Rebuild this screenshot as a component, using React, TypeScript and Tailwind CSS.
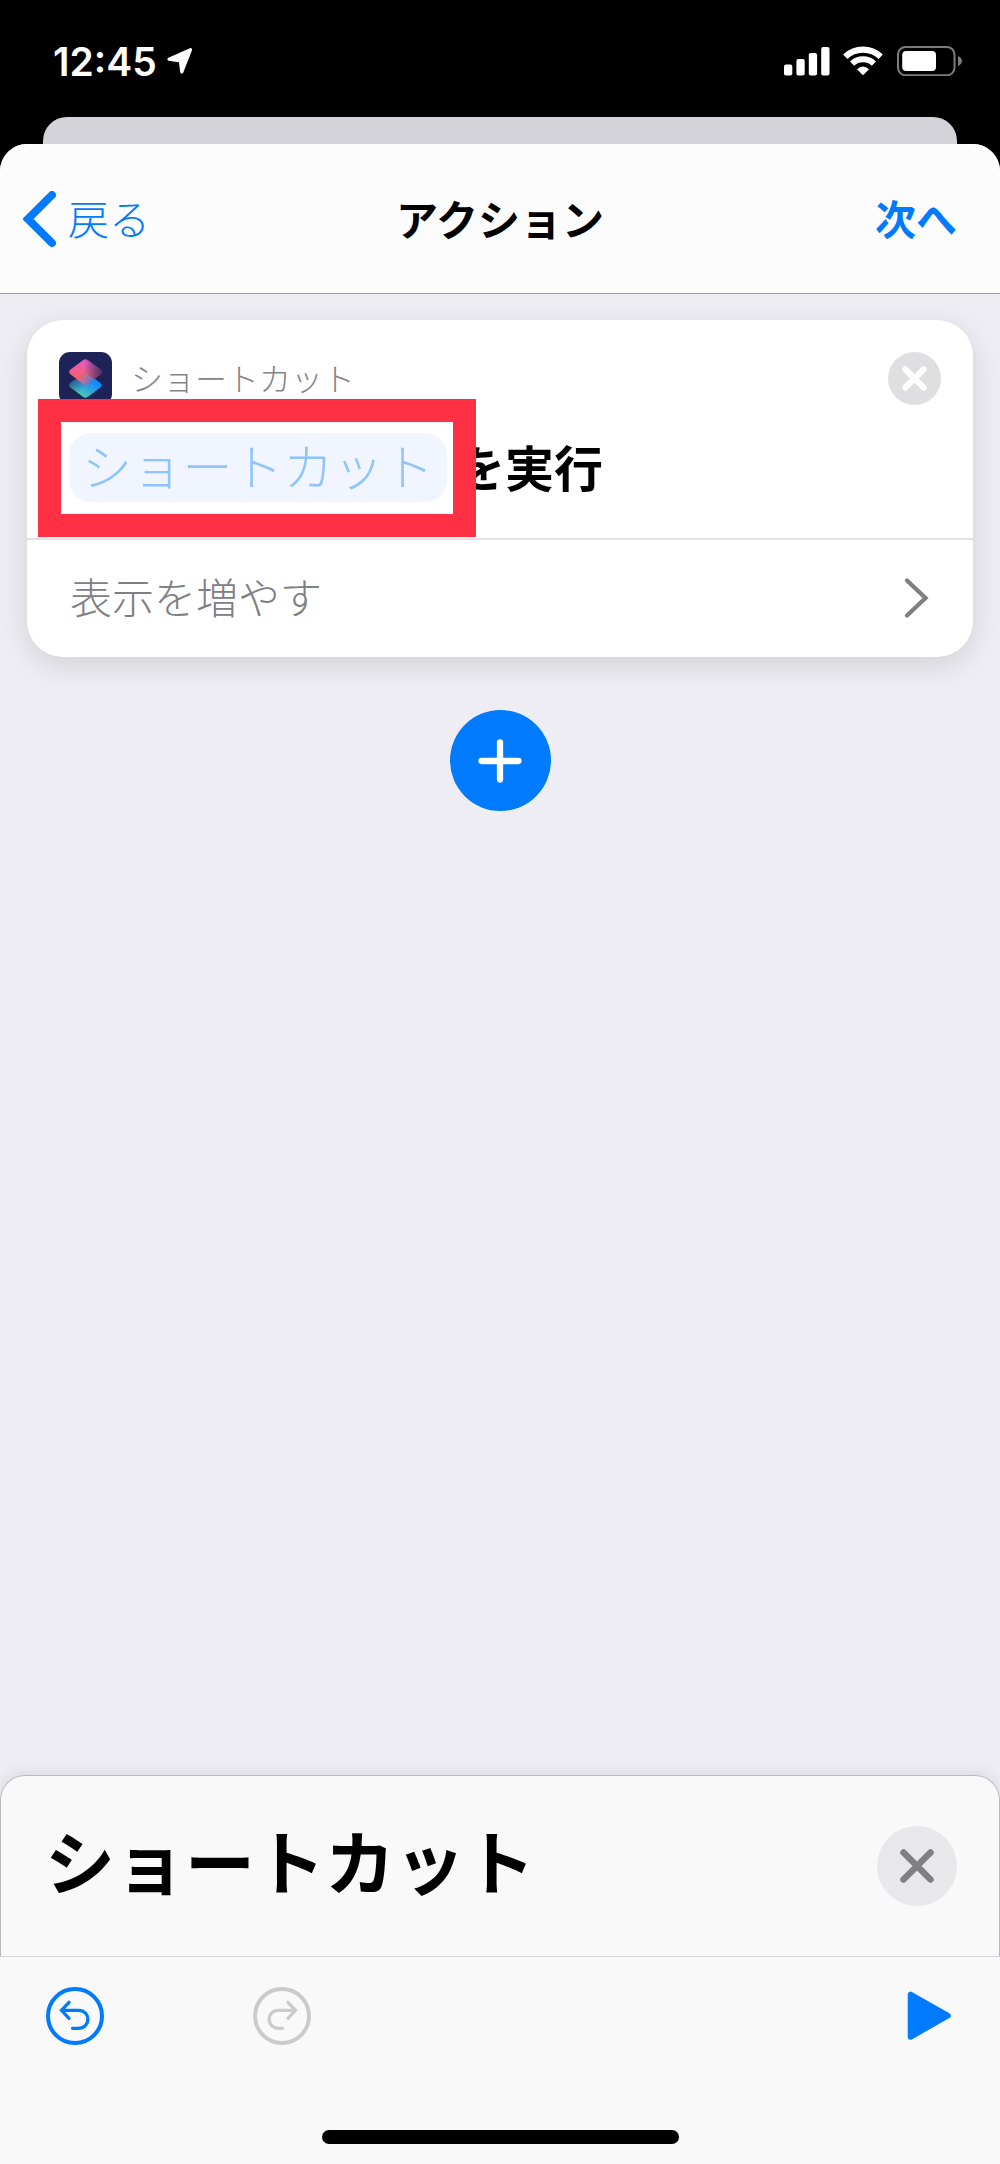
import React from "react";

const jp = "font-['Noto_Sans_CJK_JP',sans-serif]";

function StatusBar() {
  return (
    <div className="flex h-[117px] items-start justify-between pl-[53px] pr-[37px]">
      <div className="flex items-start">
        <span className="mt-[42px] font-['Inter',sans-serif] text-[39px] font-semibold leading-[39px] text-white">
          12:45
        </span>
        <svg className="ml-[9px] mt-[46px]" width="30" height="30" viewBox="0 0 30 30">
          <path
            d="M3 13.2 L24.5 3.6 L15.8 26 L14.4 14.8 Z"
            fill="white"
            stroke="white"
            strokeWidth="3.2"
            strokeLinejoin="round"
          />
        </svg>
      </div>
      <div className="flex items-start pt-[46px]">
        <svg width="46" height="30" viewBox="0 0 46 30" fill="white">
          <rect x="0" y="18.5" width="8.3" height="11" rx="2" />
          <rect x="12.4" y="13" width="8.3" height="16.5" rx="2" />
          <rect x="24.8" y="7" width="8.3" height="22.5" rx="2" />
          <rect x="37.2" y="1" width="8.3" height="28.5" rx="2" />
        </svg>
        <svg className="ml-[13px]" width="40" height="30" viewBox="0 0 40 30" fill="none" stroke="white">
          <path d="M2.3 10.7 A25.8 25.8 0 0 1 37.7 10.7" strokeWidth="6.2" />
          <path d="M9.1 17.6 A16 16 0 0 1 30.9 17.6" strokeWidth="6" />
          <path d="M14 23.2 Q20 17.6 26 23.2 L20.9 28.5 Q20 29.3 19.1 28.5 Z" fill="white" stroke="none" />
        </svg>
        <svg className="ml-[14px]" width="66" height="30" viewBox="0 0 66 30">
          <rect x="1" y="1" width="56.5" height="28.3" rx="7.5" fill="none" stroke="#7c7c7c" strokeWidth="2" />
          <rect x="5.2" y="5" width="33.8" height="20" rx="4" fill="white" />
          <path d="M61 10 Q65 12 65 15 Q65 18 61 20 Z" fill="#7c7c7c" />
        </svg>
      </div>
    </div>
  );
}

function NavBar() {
  return (
    <header className="grid h-[150px] grid-cols-3 items-start rounded-t-[27px] border-b border-[#9b9b9f] bg-[#fcfcfd] pt-[46px]">
      <div className="flex items-start pl-[23px] text-[#007aff]">
        <svg className="mt-px" width="36" height="58" viewBox="0 0 36 58" fill="none">
          <path
            d="M29 4 L5 28 L29 52"
            stroke="currentColor"
            strokeWidth="8"
            strokeLinecap="round"
            strokeLinejoin="miter"
          />
        </svg>
        <span className={`${jp} ml-[9px] mt-[7px] text-[41px] font-[300] leading-[41px]`}>戻る</span>
      </div>
      <h1 className={`${jp} mt-[7px] whitespace-nowrap text-center text-[42px] font-bold leading-[41px] text-black`}>
        アクション
      </h1>
      <span className={`${jp} mt-[7px] pr-[43px] text-right text-[41px] font-bold leading-[41px] text-[#007aff]`}>
        次へ
      </span>
    </header>
  );
}

function ShortcutsIcon() {
  return (
    <svg width="53" height="53" viewBox="0 0 53 53">
      <defs>
        <linearGradient id="upper" x1="0.5" y1="0" x2="0.3" y2="0.9">
          <stop offset="0" stopColor="#e65cc8" />
          <stop offset="1" stopColor="#fb5f58" />
        </linearGradient>
        <linearGradient id="upperShade" x1="0.45" y1="0" x2="1" y2="0">
          <stop offset="0" stopColor="#1f2358" stopOpacity="0" />
          <stop offset="1" stopColor="#2a285e" stopOpacity="0.85" />
        </linearGradient>
        <linearGradient id="lower" x1="0.25" y1="1" x2="0.75" y2="0.35">
          <stop offset="0" stopColor="#4ee29c" />
          <stop offset="0.5" stopColor="#37a9d8" />
          <stop offset="1" stopColor="#1288ff" />
        </linearGradient>
        <linearGradient id="lowerShade" x1="0" y1="0.2" x2="0.5" y2="0.5">
          <stop offset="0" stopColor="#1f2b5c" stopOpacity="0.75" />
          <stop offset="1" stopColor="#1f2b5c" stopOpacity="0" />
        </linearGradient>
        <linearGradient id="blend" x1="0" y1="0.3" x2="1" y2="0.6">
          <stop offset="0" stopColor="#f7605f" />
          <stop offset="0.5" stopColor="#b0709c" />
          <stop offset="1" stopColor="#3f80dc" />
        </linearGradient>
      </defs>
      <rect width="53" height="53" rx="11" fill="#1d2357" />
      <path d="M12 30.5 L24 22 Q26.500 20 29 22 L41.500 31 Q44 33.300 41.500 35.500 L29 44.800 Q26.500 46.600 24 44.800 L11.500 35.500 Q9 33 12 30.500Z" fill="url(#lower)" />
      <path d="M12 30.5 L24 22 Q26.500 20 29 22 L41.500 31 Q44 33.300 41.500 35.500 L29 44.800 Q26.500 46.600 24 44.800 L11.500 35.500 Q9 33 12 30.500Z" fill="url(#lowerShade)" />
      <path d="M11.500 17.500 L24 8.200 Q26.500 6.400 29 8.200 L41.500 17.500 Q44 20 41.500 22.300 L29 32 Q26.500 33.800 24 32 L11.500 22.300 Q9 20 11.500 17.500Z" fill="url(#upper)" />
      <path d="M11.500 17.500 L24 8.200 Q26.500 6.400 29 8.200 L41.500 17.500 Q44 20 41.500 22.300 L29 32 Q26.500 33.800 24 32 L11.500 22.300 Q9 20 11.500 17.500Z" fill="url(#upperShade)" />
      <path d="M18 27.300 L25 21.800 Q26.500 20.700 28 21.800 L35 27.300 L29 32 Q26.500 33.800 24 32Z" fill="url(#blend)" />
    </svg>
  );
}

function ActionCard() {
  return (
    <section className="mx-[27px] h-[337px] rounded-[36px] bg-white shadow-[0_8px_30px_rgba(0,0,0,0.12)]">
      <div className="relative h-[218px]">
        <div className="flex items-start justify-between pl-[32px] pr-[32px] pt-[32px]">
          <div className="flex items-start">
            <ShortcutsIcon />
            <span className={`${jp} ml-[19px] mt-[9px] text-[32px] font-[300] leading-[32px] text-[#848488]`}>
              ショートカット
            </span>
          </div>
          <svg width="53" height="53" viewBox="0 0 53 53">
            <circle cx="26.500" cy="26.500" r="26.500" fill="#dfdfe1" />
            <path d="M17.300 17.300 L35.700 35.700 M35.700 17.300 L17.300 35.700" stroke="white" strokeWidth="6" strokeLinecap="round" />
          </svg>
        </div>
        <div className="mt-[28px] flex items-start pl-[42px]">
          <span className={`${jp} flex h-[69px] w-[378px] items-start justify-center rounded-[22px] bg-[#f0f5ff] pt-[6px] text-[50px] font-[300] leading-[50px] tracking-[0.3px] text-[#8fc4ff]`}>
            ショートカット
          </span>
          <span className={`${jp} ml-[9px] mt-[8px] text-[49px] font-bold leading-[49px] text-black`}>を実行</span>
        </div>
        {/* Highlight frame over the parameter token */}
        <div className="absolute left-[11px] top-[79px] h-[138px] w-[438px] border-[23px] border-[#ff2f44]" />
      </div>
      <div className="flex items-start justify-between border-t-2 border-[#e3e3e4] pl-[43px] pr-[44px]">
        <span className={`${jp} mt-[35px] text-[42px] font-[300] leading-[42px] text-[#808084]`}>表示を増やす</span>
        <svg className="mt-[36px]" width="26" height="44" viewBox="0 0 26 44" fill="none">
          <path d="M4 4.500 L22.500 22 L4 39.500" stroke="#808084" strokeWidth="4.300" strokeLinecap="round" />
        </svg>
      </div>
    </section>
  );
}

function BottomSheet() {
  return (
    <footer className="h-[389px] rounded-t-[25px] bg-[#f9f9f9] shadow-[0_-2px_16px_rgba(0,0,0,0.09)]">
      <div className="flex h-[181px] items-start justify-between rounded-t-[25px] border border-b-0 border-[#b9b9bd] pl-[44px] pr-[42px]">
        <h2 className={`${jp} mt-[49px] text-[70px] font-bold leading-[70px] text-black`}>ショートカット</h2>
        <svg className="mt-[50px]" width="80" height="80" viewBox="0 0 80 80">
          <circle cx="40" cy="40" r="40" fill="#e8e8ea" />
          <path d="M26.500 26.500 L53.500 53.500 M53.500 26.500 L26.500 53.500" stroke="#808084" strokeWidth="6.500" strokeLinecap="round" />
        </svg>
      </div>
      <div className="flex h-[174px] items-start border-t border-[#d6d6d8] pl-[46px] pr-[48px] pt-[30px]">
        <svg width="58" height="58" viewBox="0 0 58 58" fill="none" stroke="#007aff" strokeLinecap="round">
          <circle cx="29" cy="29" r="27" strokeWidth="4" />
          <path d="M23 15.300 L15.500 23.300 L23 31.300 M16 23.300 H32.500 C45 23.300 45 41.300 32.500 41.300 H26.500" strokeWidth="3.300" />
        </svg>
        <svg className="ml-[149px]" width="58" height="58" viewBox="0 0 58 58" fill="none" stroke="#cbcbcb" strokeLinecap="round">
          <circle cx="29" cy="29" r="27" strokeWidth="4" />
          <path d="M35 15.300 L42.500 23.300 L35 31.300 M42 23.300 H25.500 C13 23.300 13 41.300 25.500 41.300 H29.500" strokeWidth="3.300" />
        </svg>
        <svg className="ml-auto mt-[4px]" width="45" height="50" viewBox="0 0 45 50">
          <path d="M3.500 3.500 V46 L41 24.700 Z" fill="#007aff" stroke="#007aff" strokeWidth="5.500" strokeLinejoin="round" />
        </svg>
      </div>
      <div className="mx-auto h-[14px] w-[357px] rounded-full bg-black" />
    </footer>
  );
}

export default function App() {
  return (
    <div className="flex h-[2164px] w-[1000px] flex-col overflow-hidden bg-black">
      <StatusBar />
      <div className="mx-[43px] h-[27px] shrink-0 rounded-t-[24px] bg-[#d4d3d9]" />
      <main className="flex flex-1 flex-col rounded-t-[27px] bg-[#eeedf3]">
        <NavBar />
        <div className="flex flex-1 flex-col pt-[26px]">
          <ActionCard />
          <button className="mx-auto mt-[53px] flex size-[101px] items-center justify-center rounded-full bg-[#007aff]">
            <svg width="44" height="44" viewBox="0 0 44 44">
              <path d="M22 3.500 V40.500 M3.500 22 H40.500" stroke="white" strokeWidth="6.300" strokeLinecap="round" />
            </svg>
          </button>
        </div>
        <BottomSheet />
      </main>
    </div>
  );
}
